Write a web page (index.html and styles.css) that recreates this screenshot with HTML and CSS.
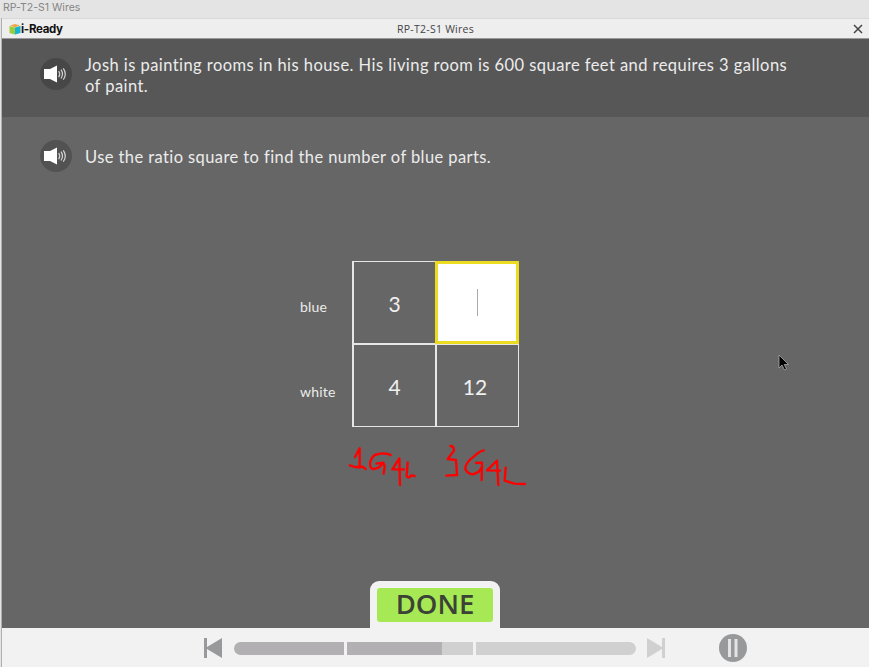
FILE: index.html
```
<!DOCTYPE html>
<html lang="en">
<head>
<meta charset="utf-8">
<title>RP-T2-S1 Wires</title>
<link rel="stylesheet" href="styles.css">
</head>
<body>
<div class="app">
  <div class="caption">RP-T2-S1 Wires</div>
  <div class="window">
    <header class="titlebar">
      <div class="brand">
        <svg class="cube" width="12" height="12" viewBox="0 0 12 12"><path d="M1 2.500L6 1l5 1.500-5 1.800z" fill="#f0a544"/><path d="M.5 3L6 4.600V11.600L.5 10z" fill="#9ccb3b"/><path d="M6 4.600L11.500 3v7L6 11.600z" fill="#12b5d3"/></svg>
        <span class="brand-name">i-Ready</span>
      </div>
      <div class="title">RP-T2-S1 Wires</div>
      <svg class="close" width="10" height="10" viewBox="0 0 10 10"><path d="M1 1l8 8M9 1L1 9" stroke="#444" stroke-width="1.500"/></svg>
    </header>
    <section class="prompt">
      <svg class="speaker" width="32" height="32" viewBox="0 0 32 32"><circle class="disc" cx="16" cy="16" r="16"/><path d="M4 11h6L17 7.500v17L10 21H4z" fill="#fff"/><path d="M18.700 13q2 3 0 6.200M21 11.700q3 4.400 0 8.800M23.300 10.300q4 5.700 0 11.400" fill="none" stroke="#d5d5d5" stroke-width="1.200"/></svg>
      <p class="story">Josh is painting rooms in his house. His living room is 600 square feet and requires 3 gallons<br>of paint.</p>
    </section>
    <main class="work">
      <div class="question">
        <svg class="speaker" width="32" height="32" viewBox="0 0 32 32"><circle class="disc" cx="16" cy="16" r="16"/><path d="M4 11h6L17 7.500v17L10 21H4z" fill="#fff"/><path d="M18.700 13q2 3 0 6.200M21 11.700q3 4.400 0 8.800M23.300 10.300q4 5.700 0 11.400" fill="none" stroke="#d5d5d5" stroke-width="1.200"/></svg>
        <p class="ask">Use the ratio square to find the number of blue parts.</p>
      </div>
      <div class="ratio">
        <div class="labels"><span>blue</span><span>white</span></div>
        <div class="square">
          <div class="cell">3</div>
          <div class="cell active"><span class="caret"></span></div>
          <div class="cell">4</div>
          <div class="cell last">12</div>
        </div>
      </div>
      <svg class="ink" width="200" height="60" viewBox="0 0 600 180">
        <path d="M45 66L59 40L59 98M29 91L45 96L68 95L77 102"/>
        <path d="M152 60Q143 54 121 56L104 60Q91 71 90 87Q91 103 101 102L116 98L126 88M109 86L130 83L134 93L131 116"/>
        <path d="M180 150L178 70L157 103L192 103M203 82L200 124Q207 132 213 121L224 123"/>
        <path d="M331 33Q342 33 342 47L323 72L348 75L351 120L319 122"/>
        <path d="M431 46Q419 48 402 64Q375 83 376 102Q382 117 400 118L417 110L425 97M408 84L426 83L425 135"/>
        <path d="M475 150L471 77L441 106L480 107M497 98L494 137L523 146L555 147"/>
      </svg>
      <div class="done-tab"><button class="done">DONE</button></div>
    </main>
    <footer class="player">
      <svg class="prev" width="18" height="20" viewBox="0 0 18 20"><path d="M0 0h3v9L18 0v20L3 11v9H0z" fill="#98999b"/></svg>
      <div class="progress"><i class="seg one"></i><i class="seg two"></i><i class="seg three"></i></div>
      <svg class="next" width="18" height="20" viewBox="0 0 18 20"><path d="M18 0h-3v9L0 0v20l15-9v9h3z" fill="#d0d0d0"/></svg>
      <svg class="pause" width="28" height="28" viewBox="0 0 28 28"><circle cx="14" cy="14" r="14" fill="#98999b"/><path d="M9 5h3v18H9zM15.500 5h3v18h-3z" fill="#e4e4e4"/></svg>
    </footer>
  </div>
  <svg class="pointer" width="12" height="17" viewBox="0 0 12 17"><path d="M1 1v13l3-3 2.500 5 2-1-2.300-4.500H10.500z" fill="#000" stroke="#aaa" stroke-width=".8"/></svg>
</div>
</body>
</html>
```
FILE: styles.css
```
* { box-sizing: border-box; }
body { margin: 0; }
.app { position: relative; width: 869px; height: 667px; overflow: hidden; background: #e4e4e4; display: flex; flex-direction: column; }
.caption { height: 18px; padding-left: 3px; font: 10.500px/16px Inter, sans-serif; color: #858585; }
.window { height: 649px; margin-left: 1px; border-left: 1px solid #b0b0b0; display: flex; flex-direction: column; }
.titlebar { height: 21px; display: grid; grid-template-columns: 1fr 120px 1fr; align-items: center; background: #eee; border-top: 1px solid #d8d8d8; border-bottom: 1px solid #999; }
.brand { display: flex; align-items: center; padding-left: 7px; }
.brand-name { font: 700 11.500px/18px Inter, sans-serif; letter-spacing: -.3px; color: #111; }
.title { text-align: center; font: 10.500px/18px "Open Sans", sans-serif; letter-spacing: .25px; color: #444; white-space: nowrap; }
.close { justify-self: end; margin-right: 6px; }
.prompt { height: 78px; background: #575757; display: flex; align-items: flex-start; padding: 19px 0 0 38px; }
.prompt .disc { fill: #474747; }
.speaker { flex: none; }
.story, .ask { margin: 0; color: #ececec; font: 16.500px/21px Lato, sans-serif; white-space: nowrap; }
.story { margin: -3px 0 0 13px; letter-spacing: .44px; }
.work { flex: 1; background: #666; display: flex; flex-direction: column; }
.question { display: flex; padding: 23px 0 0 38px; height: 144px; }
.question .disc { fill: #525252; }
.ask { margin: 7px 0 0 13px; letter-spacing: .41px; }
.ratio { display: flex; margin-left: 298px; height: 166px; }
.labels { width: 52px; display: flex; flex-direction: column; font: 14px/20px Lato, sans-serif; letter-spacing: .2px; color: #ececec; padding-top: 36px; gap: 65px; }
.square { width: 167px; height: 166px; display: grid; grid-template-columns: 1fr 1fr; grid-template-rows: 1fr 1fr; background: #e6e6e6; gap: 2px; padding: 1px 1px 1px 2px; }
.cell { background: #666; color: #f0f0f0; display: flex; align-items: center; justify-content: center; font: 21px/24px Lato, sans-serif; padding-top: 3px; }
.cell.last { padding-right: 5px; }
.cell.active { margin: -1px -1px -1px -2px; background: #fff; border: 3px solid #ebdc22; padding: 0; }
.caret { width: 1px; height: 27px; background: #aaa; }
.ink { margin: 8px 0 0 338px; fill: none; stroke: #f00; stroke-width: 7; stroke-linecap: round; stroke-linejoin: round; }
.done-tab { margin: auto 0 0 368px; width: 130px; height: 47px; border-radius: 9px 9px 0 0; background: #f2f2f2; padding: 7px 7px 6px; display: flex; }
.done { flex: 1; border: 0; border-radius: 3px; background: #a6e955; color: #3c4236; font: 600 27.500px/32px "Open Sans", sans-serif; padding: 0 0 3px; }
.player { height: 39px; background: #f2f2f2; display: flex; align-items: center; padding: 1px 0 0 202px; }
.progress { width: 402px; height: 13px; margin: 0 11px 0 12px; display: flex; gap: 3px; border-radius: 7px; overflow: hidden; }
.seg { background: #d0d0d0; }
.seg.one { width: 110px; background: #b2b0b3; }
.seg.two { width: 126px; background: linear-gradient(90deg, #b2b0b3 95px, #d0d0d0 95px); }
.seg.three { flex: 1; }
.pause { margin-left: 54px; }
.pointer { position: absolute; left: 778px; top: 354px; }
```
